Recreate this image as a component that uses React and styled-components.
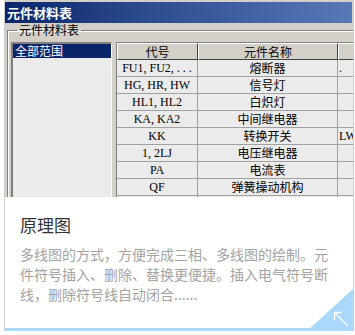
import React from "react";
import styled, { createGlobalStyle } from "styled-components";

const Global = createGlobalStyle`
  html, body { margin: 0; padding: 0; background: #fff; }
  body { font-family: "Noto Sans CJK SC", "Noto Sans", sans-serif; }
`;

const Card = styled.div`
  position: relative;
  margin-left: 4px;
  width: 350px;
  box-sizing: border-box;
  border-left: 1px solid #cfcfcf;
  border-right: 1px solid #cfcfcf;
  background: #fff;
  overflow: hidden;
`;

const Shot = styled.div`
  margin-left: -5px;
  width: 353px;
  height: 197px;
  box-sizing: border-box;
  padding: 2px 1px 0 2px;
  background: #d4d0c8;
  overflow: hidden;
  font-family: "Liberation Serif", "Noto Sans CJK SC", serif;
`;

const TitleBar = styled.div`
  height: 21px;
  display: flex;
  align-items: center;
  padding-left: 5px;
  background: linear-gradient(90deg, #0a246a 0%, #2c4a8e 40%, #5878b8 100%);
  color: #fff;
  font: bold 13px "Noto Sans CJK SC", sans-serif;
  letter-spacing: 0px;
`;

const Group = styled.fieldset`
  margin: 1px 0 0 5px;
  padding: 6px 0 0 3px;
  border: none;
  border-top: 1px solid #808080;
  border-left: 1px solid #808080;
  box-shadow: inset 1px 1px 0 #fff;
  display: flex;
  gap: 4px;
  height: 180px;
  box-sizing: border-box;
`;

const Legend = styled.legend`
  padding: 0 2px;
  margin-left: 6px;
  font: 12px/12px "Noto Sans CJK SC", sans-serif;
  color: #000;
`;

const ListBox = styled.div`
  width: 101px;
  flex: none;
  box-sizing: border-box;
  border-top: 2px solid #808080;
  border-left: 2px solid #808080;
  border-right: 1px solid #fff;
  background: #ebebeb;
  height: 200px;
`;

const ListItem = styled.div`
  height: 14px;
  line-height: 14px;
  padding-left: 2px;
  font: 12px/14px "Noto Sans CJK SC", sans-serif;
  background: ${(p) => (p.$selected ? "#0a246a" : "transparent")};
  color: ${(p) => (p.$selected ? "#fff" : "#000")};
`;

const Table = styled.div`
  flex: none;
  width: 240px;
  display: grid;
  grid-template-columns: 81px 140px 19px;
  grid-auto-rows: 17px;
  align-content: start;
  border-top: 1px solid #808080;
  border-left: 1px solid #808080;
`;

const Head = styled.div`
  background: #d4d0c8;
  border-top: 1px solid #fff;
  border-left: 1px solid #fff;
  border-right: 1px solid #404040;
  border-bottom: 1px solid #404040;
  box-sizing: border-box;
  display: flex;
  align-items: center;
  justify-content: center;
  font: 12px "Noto Sans CJK SC", sans-serif;
  color: #000;
`;

const Cell = styled.div`
  background: #ebebeb;
  border-right: 1px solid #a0a0a0;
  border-bottom: 1px solid #a0a0a0;
  box-sizing: border-box;
  display: flex;
  align-items: center;
  justify-content: ${(p) => (p.$left ? "flex-start" : "center")};
  padding-left: ${(p) => (p.$left ? "1px" : "0")};
  overflow: hidden;
  white-space: nowrap;
  font-size: 12px;
  color: #000;
`;

const Body = styled.div`
  height: 131px;
  box-sizing: border-box;
  padding: 16px 20px 0 15px;
`;

const Title = styled.h3`
  margin: 0;
  font: 17px/24px "Noto Sans CJK SC", sans-serif;
  color: #333;
  font-weight: 400;
`;

const Desc = styled.p`
  margin: 7px 0 0;
  font: 14px/20px "Noto Sans CJK SC", sans-serif;
  color: #a3a3a3;
`;

const Bar = styled.div`
  height: 3px;
  background: #a9d8fa;
`;

const Corner = styled.div`
  position: absolute;
  right: 0;
  bottom: 0;
  width: 46px;
  height: 42px;
  background: #a9d8fa;
  clip-path: polygon(100% 0, 100% 100%, 0 100%);
  display: flex;
  align-items: flex-end;
  justify-content: flex-end;
  padding: 0 4px 4px 0;
  box-sizing: border-box;
`;

const rows = [
  ["FU1, FU2, . . .", "熔断器", "."],
  ["HG, HR, HW", "信号灯", ""],
  ["HL1, HL2", "白炽灯", ""],
  ["KA, KA2", "中间继电器", ""],
  ["KK", "转换开关", "LW"],
  ["1, 2LJ", "电压继电器", ""],
  ["PA", "电流表", ""],
  ["QF", "弹簧操动机构", ""],
  ["", "按钮", ""],
];

export default function App() {
  return (
    <>
      <Global />
      <Card>
        <Shot>
          <TitleBar>元件材料表</TitleBar>
          <Group>
            <Legend>元件材料表</Legend>
            <ListBox>
              <ListItem $selected>全部范围</ListItem>
            </ListBox>
            <Table>
              <Head>代号</Head>
              <Head>元件名称</Head>
              <Head />
              {rows.map((r, i) => (
                <React.Fragment key={i}>
                  <Cell>{r[0]}</Cell>
                  <Cell>{r[1]}</Cell>
                  <Cell $left>{r[2]}</Cell>
                </React.Fragment>
              ))}
            </Table>
          </Group>
        </Shot>
        <Body>
          <Title>原理图</Title>
          <Desc>
            多线图的方式，方便完成三相、多线图的绘制。元件符号插入、删除、替换更便捷。插入电气符号断线，删除符号线自动闭合......
          </Desc>
        </Body>
        <Bar />
        <Corner>
          <svg width="16" height="16" viewBox="0 0 16 16" fill="none" stroke="#fff" strokeWidth="1.3">
            <path d="M1.5 1.5 L15 15" />
            <path d="M1.5 1.5 H9" />
            <path d="M1.5 1.5 V9" />
          </svg>
        </Corner>
      </Card>
    </>
  );
}
